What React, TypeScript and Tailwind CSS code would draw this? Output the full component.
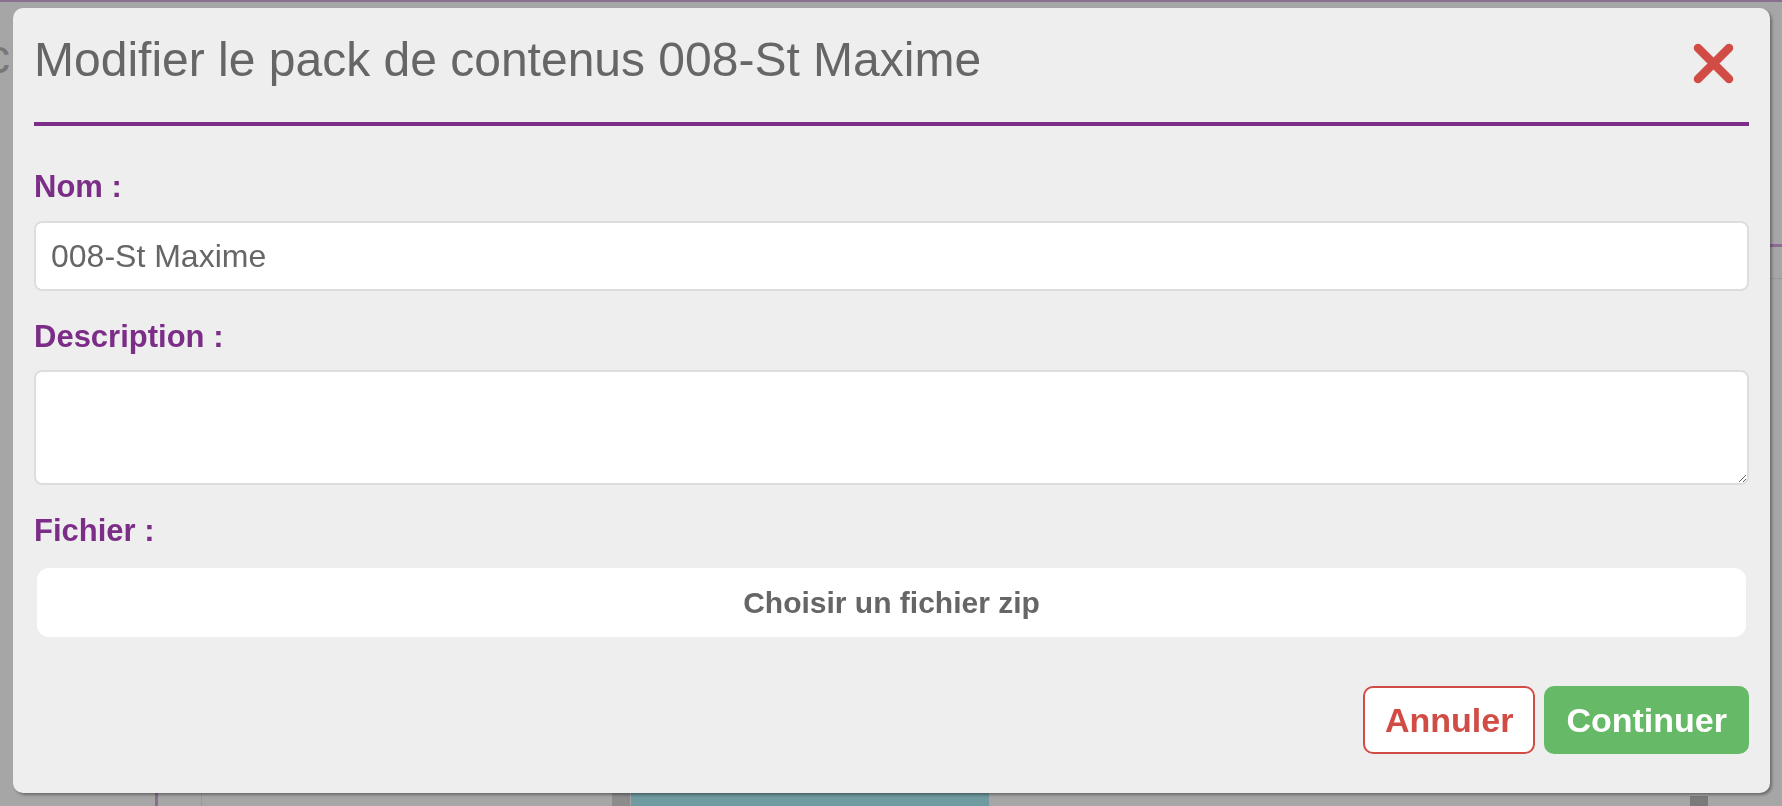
import { useState } from 'react';

function CloseIcon() {
  return (
    <svg width="41" height="41" viewBox="0 0 41 41" fill="none">
      <path
        d="M5 5 L36 36 M36 5 L5 36"
        stroke="#d14c44"
        strokeWidth="8.5"
        strokeLinecap="round"
      />
    </svg>
  );
}

// the page that sits behind the grey overlay
function Backdrop() {
  return (
    <div className="flex h-[806px] flex-col overflow-hidden bg-[#a6a6a6]">
      <div className="h-[2px] bg-[#8b6f90]" />
      <div className="flex flex-1 justify-between">
        <div className="ml-[-14px] mt-[28px] text-[48px] leading-[53px] text-[#777]">c</div>
        <div className="mt-[242px] flex w-[12px] flex-col gap-[31px]">
          <div className="h-[3px] bg-[#8d6b93]" />
          <div className="h-[1px] bg-[#999]" />
        </div>
      </div>
      <div className="flex h-[14px]">
        <div className="ml-[155px] w-[3px] bg-[#8d6b93]" />
        <div className="ml-[43px] w-[1px] bg-[#999]" />
        <div className="ml-[410px] w-[18px] bg-[#8c8c8c]" />
        <div className="ml-[1px] w-[358px] bg-[#6f9aa0]" />
        <div className="ml-[701px] mt-[4px] w-[18px] bg-[#7a7a7a]" />
      </div>
    </div>
  );
}

export default function App() {
  const [name, setName] = useState('008-St Maxime');
  const [description, setDescription] = useState('');

  return (
    <div className="relative h-[806px] w-full overflow-hidden font-['Liberation_Sans',Arial,sans-serif]">
      <Backdrop />

      <div className="fixed inset-0 pl-[13px] pr-[12px] pt-[8px]">
        <div className="rounded-[10px] bg-[#eeeeee] shadow-[2px_2px_3px_rgba(0,0,0,0.35)]">
          <div className="mx-[21px] flex items-start justify-between border-b-4 border-[#7b2d87] pb-[36px] pt-[25px]">
            <h2 className="text-[48px] leading-[53px] text-[#666666]">
              Modifier le pack de contenus 008-St Maxime
            </h2>
            <button className="mr-[15px] mt-[10px]">
              <CloseIcon />
            </button>
          </div>

          <div className="flex flex-col px-[21px] pb-[39px] pt-[43px]">
            <label className="text-[31px] font-bold leading-[36px] text-[#7b2d87]">Nom :</label>
            <input
              type="text"
              value={name}
              onChange={(e) => setName(e.target.value)}
              className="mt-[16px] h-[70px] w-full rounded-[8px] border-2 border-[#dddddd] bg-white px-[15px] text-[32px] text-[#666666] outline-none"
            />

            <label className="mt-[28px] text-[31px] font-bold leading-[36px] text-[#7b2d87]">
              Description :
            </label>
            <textarea
              value={description}
              onChange={(e) => setDescription(e.target.value)}
              className="mt-[15px] h-[115px] w-full rounded-[8px] border-2 border-[#dddddd] bg-white px-[15px] py-[10px] text-[32px] text-[#666666] outline-none"
            />

            <label className="mt-[28px] text-[31px] font-bold leading-[36px] text-[#7b2d87]">
              Fichier :
            </label>
            <button className="mx-[3px] mt-[19px] flex h-[69px] items-center justify-center rounded-[12px] bg-white text-[30px] font-bold text-[#666666]">
              Choisir un fichier zip
            </button>

            <div className="mt-[49px] flex justify-end gap-[9px]">
              <button className="h-[68px] rounded-[10px] border-2 border-[#d14c44] bg-white px-[20px] text-[34px] font-bold text-[#d14c44]">
                Annuler
              </button>
              <button className="h-[68px] rounded-[10px] border-2 border-[#66b966] bg-[#66b966] px-[20px] text-[34px] font-bold text-white">
                Continuer
              </button>
            </div>
          </div>
        </div>
      </div>
    </div>
  );
}
